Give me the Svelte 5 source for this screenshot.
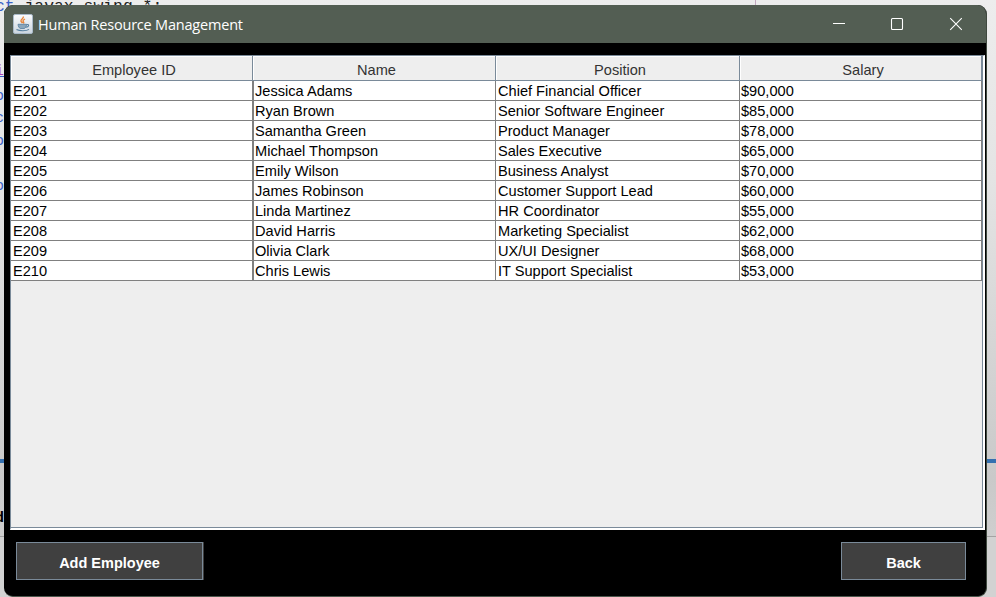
<script>
  const columns = ['Employee ID', 'Name', 'Position', 'Salary'];
  const rows = [
    ['E201', 'Jessica Adams', 'Chief Financial Officer', '$90,000'],
    ['E202', 'Ryan Brown', 'Senior Software Engineer', '$85,000'],
    ['E203', 'Samantha Green', 'Product Manager', '$78,000'],
    ['E204', 'Michael Thompson', 'Sales Executive', '$65,000'],
    ['E205', 'Emily Wilson', 'Business Analyst', '$70,000'],
    ['E206', 'James Robinson', 'Customer Support Lead', '$60,000'],
    ['E207', 'Linda Martinez', 'HR Coordinator', '$55,000'],
    ['E208', 'David Harris', 'Marketing Specialist', '$62,000'],
    ['E209', 'Olivia Clark', 'UX/UI Designer', '$68,000'],
    ['E210', 'Chris Lewis', 'IT Support Specialist', '$53,000']
  ];
  const fragments = [
    { text: 'i', top: 62, color: '#b03fb5' },
    { text: 'o', top: 87, color: '#3a62c8' },
    { text: 'c', top: 109, color: '#3a62c8' },
    { text: 'o', top: 132, color: '#3a62c8' },
    { text: 'o', top: 177, color: '#3a62c8' }
  ];
</script>

<div class="desktop">
  <div class="code"><span>ct</span> javax.swing.*;</div>
  {#each fragments as f}
    <span class="frag" style:top="{f.top}px" style:color={f.color}>{f.text}</span>
  {/each}
  <i class="margin-line"></i>
  <i class="underline"></i>
  <i class="blue"></i>
  <i class="lower"></i>
  <b class="console">d</b>

  <main class="window">
    <header class="titlebar">
      <svg class="java" width="20" height="20" viewBox="0 0 20 20">
        <defs>
          <linearGradient id="tile" x1="0" y1="0" x2="0" y2="1">
            <stop offset="0" stop-color="#fbfcfd" /><stop offset="1" stop-color="#cbd5df" />
          </linearGradient>
        </defs>
        <rect x=".5" y=".5" width="19" height="19" rx="1.5" fill="url(#tile)" stroke="#a9bac9" />
        <path d="M10.2 2.5c1 1.8-2.8 3-2.2 4.6.2.7 1 1.2 1.5 2M12 5c-2.2 1.2-2.4 2-1.4 3.2.4.6.2 1-.2 1.4" fill="none" stroke="#e8853a" stroke-width="1.4" />
        <path d="M5 10.3h8.6c-.2 2.6-1.4 3.8-2.2 4.2H7.2C6 13.8 5.2 12.5 5 10.3z" fill="#8ba6bb" stroke="#557f9f" stroke-width=".8" />
        <path d="M13.6 10.5c3-.4 2.6 2.3-.7 2.8M3.5 15.5c3 1.6 10 1.6 12.5-.1" fill="none" stroke="#557f9f" stroke-width="1.1" />
      </svg>
      <h1>Human Resource Management</h1>
      <div class="controls">
        <svg width="14" height="14" viewBox="0 0 14 14"><path d="M1 6.5h12" /></svg>
        <svg width="14" height="14" viewBox="0 0 14 14"><rect x="1.5" y="1.5" width="11" height="11" rx="1" /></svg>
        <svg width="14" height="14" viewBox="0 0 14 14"><path d="M1.2 1.2l11.6 11.6M12.8 1.2L1.2 12.8" /></svg>
      </div>
    </header>
    <section class="pane">
      <div class="view">
        <div class="row head">
          {#each columns as c}<div class="cell"><span>{c}</span></div>{/each}
        </div>
        {#each rows as r}
          <div class="row">
            {#each r as value}<div class="cell"><span>{value}</span></div>{/each}
          </div>
        {/each}
      </div>
    </section>
    <footer>
      <button class="add">Add Employee</button>
      <button class="back">Back</button>
    </footer>
  </main>
</div>

<style>
  :global(body) { margin: 0; }
  .desktop {
    position: relative;
    width: 996px;
    height: 597px;
    overflow: hidden;
    box-sizing: border-box;
    padding: 5px 9px 0 4px;
    background: linear-gradient(#ededed, #e4e4e4 30%, #c9c9c9 80%, #d4d4d4);
    font-family: 'Liberation Sans', Arial, sans-serif;
  }
  .code, .frag, .desktop > i, .console { position: absolute; }
  .code {
    left: -5px;
    top: -3px;
    font: 16.4px/20px 'Liberation Mono', monospace;
    color: #222;
    white-space: pre;
  }
  .code span { color: #3a62c8; }
  .frag { left: -5px; font: 15px/20px 'Liberation Mono', monospace; }
  .margin-line { left: 755px; top: 0; width: 1px; height: 6px; background: #c3a9c0; }
  .underline { left: 0; top: 76px; width: 4px; height: 1px; background: #3a62c8; }
  .blue { left: 0; top: 459px; width: 996px; height: 4px; background: #3470b0; }
  .lower { left: 0; top: 536px; width: 996px; height: 61px; border-top: 1px solid #a3a3a3; background: #d2d2d2; box-sizing: border-box; }
  .console { left: -5px; top: 510px; font: bold 15px/18px 'Liberation Mono', monospace; color: #000; }
  .window {
    position: relative;
    width: 983px;
    height: 592px;
    box-sizing: border-box;
    border-right: 1px solid #3f493f;
    border-bottom: 1px solid #4c574d;
    border-radius: 9px;
    overflow: hidden;
    background: #000;
    display: flex;
    flex-direction: column;
  }
  .titlebar {
    height: 38px;
    flex: none;
    display: flex;
    align-items: center;
    background: #535e53;
    padding-left: 9px;
  }
  .java { flex: none; margin-bottom: 1px; }
  h1 {
    margin: 2px 0 0 5px;
    font: 400 14.5px/20px 'Open Sans', 'Noto Sans', sans-serif;
    letter-spacing: -0.2px;
    color: #fff;
    white-space: nowrap;
  }
  .controls { margin: 0 23px 1px auto; display: flex; gap: 45px; }
  .controls svg { fill: none; stroke: #fff; stroke-width: 1.1; }
  .controls svg:first-child { margin-right: -1px; }
  .pane {
    margin: 12px 0 0 6px;
    width: 975px;
    height: 475px;
    box-sizing: border-box;
    flex: none;
    border-left: 1px solid #7a8a99;
    border-top: 1px solid #7a8a99;
    border-right: 2px solid #fff;
    border-bottom: 2px solid #fff;
    background: #eee;
  }
  .view {
    box-sizing: border-box;
    height: 100%;
    border-right: 1px solid #7a8a99;
    border-bottom: 1px solid #7a8a99;
  }
  .row {
    display: grid;
    grid-template-columns: 242px 243px 244px 242px;
    grid-template-rows: 100%;
    height: 20px;
    background: #fff;
  }
  .cell {
    box-sizing: border-box;
    border-right: 1px solid #808080;
    border-bottom: 1px solid #808080;
    padding-left: 2px;
    font-size: 14.6px;
    line-height: 21px;
    color: #000;
    white-space: nowrap;
  }
  .row:not(.head) .cell:nth-child(2) { border-left: 1px solid #808080; padding-left: 1px; }
  .cell:nth-child(4) { padding-left: 1px; }
  .row.head { height: 25px; }
  .head .cell {
    border-color: #7a8a99;
    background: #eee;
    box-shadow: inset 1px 1px #fff;
    padding: 0 0 0 5px;
    text-align: center;
    color: #333;
    line-height: 29px;
  }
  footer { display: flex; justify-content: space-between; padding: 12px 20px 0 12px; }
  button {
    box-sizing: border-box;
    height: 38px;
    padding: 3px 0 0;
    border: 1px solid #7a8a99;
    border-radius: 0;
    background: #404040;
    color: #fff;
    font: bold 14.5px/20px 'Liberation Sans', Arial, sans-serif;
  }
  .add { width: 187px; box-shadow: 1px 0 #404040; }
  .back { width: 125px; }
</style>
